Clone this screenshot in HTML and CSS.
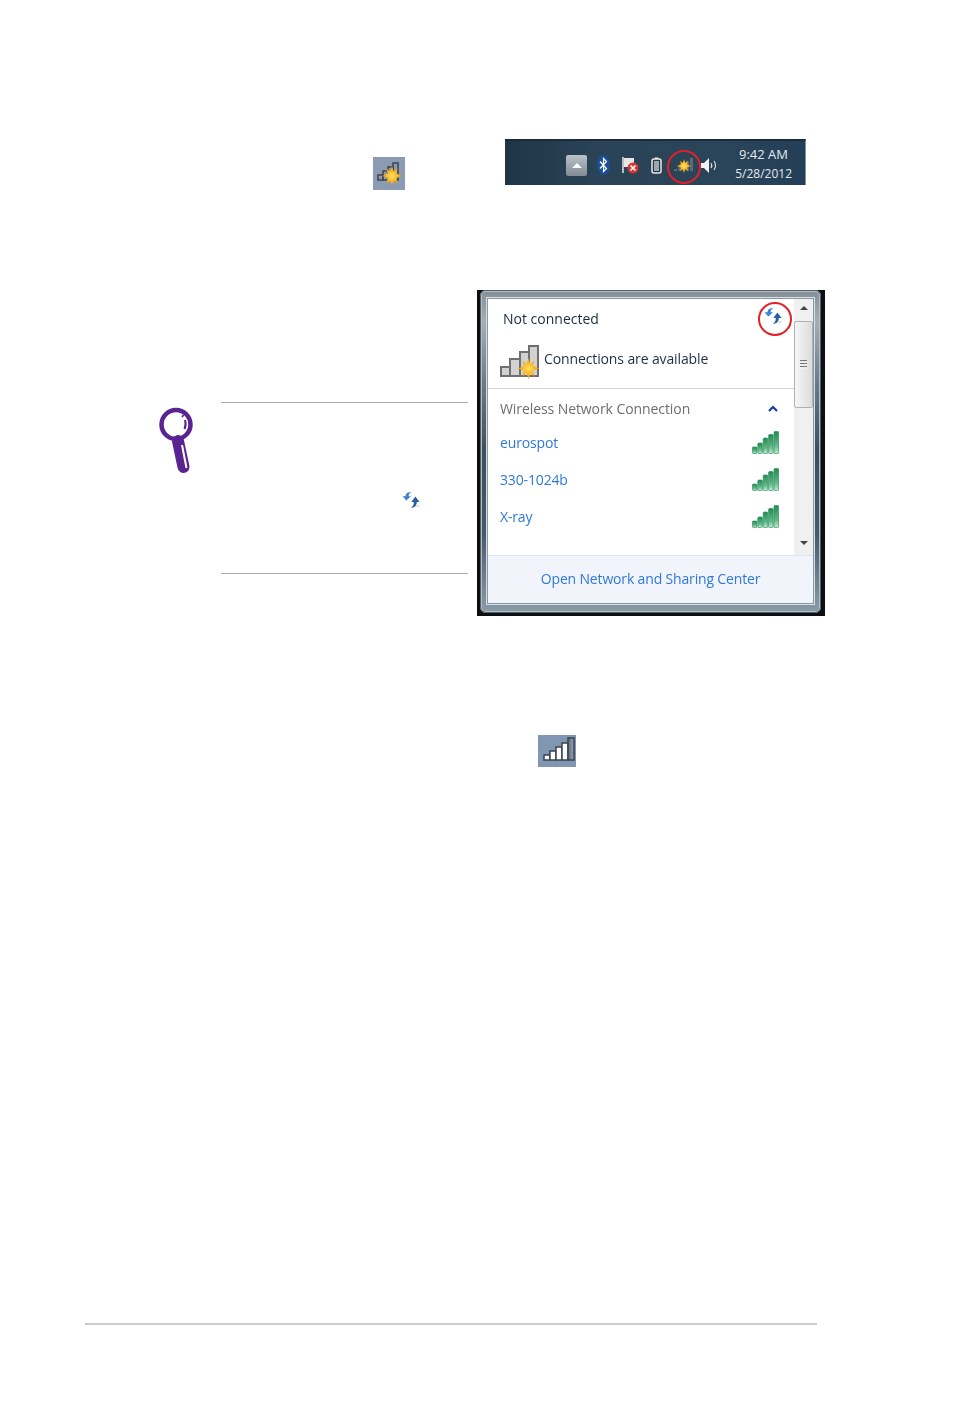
FILE: index.html
```html
<!DOCTYPE html>
<html lang="en">
<head>
    <meta charset="UTF-8">
    <meta name="viewport" content="width=device-width, initial-scale=1.0">
    <title>Wireless network connection</title>
    <link rel="stylesheet" href="styles.css">
</head>
<body>
    <svg class="defs" aria-hidden="true">
        <defs>
            <linearGradient id="barGreen" x1="0" y1="0" x2="0" y2="1">
                <stop offset="0" stop-color="#1f8a52"/>
                <stop offset="0.65" stop-color="#62b98a"/>
                <stop offset="1" stop-color="#c4ead4"/>
            </linearGradient>
            <radialGradient id="sunFill">
                <stop offset="0" stop-color="#ffe06a"/>
                <stop offset="0.6" stop-color="#fbb41a"/>
                <stop offset="1" stop-color="#ee9200"/>
            </radialGradient>
            <linearGradient id="lastBar" x1="0" y1="0" x2="1" y2="0">
                <stop offset="0" stop-color="#5f6b78"/>
                <stop offset="1" stop-color="#98a6b6"/>
            </linearGradient>
            <symbol id="sun" viewBox="-10 -10 20 20">
                <polygon fill="url(#sunFill)" points="0,-10 1.8,-4.4 5.6,-7.6 4.4,-2.6 10,0 4.4,2 5.6,7.6 1.8,4.4 0,10 -1.8,4.4 -5.6,7.6 -4.4,2 -10,0 -4.4,-2.6 -5.6,-7.6 -1.8,-4.4"/>
            </symbol>
            <symbol id="signal" viewBox="0 0 27 23">
                <g fill="url(#barGreen)" stroke="#2f9059" stroke-width="0.7">
                    <rect x="0.4" y="16" width="4.600" height="6.600" rx="1"/>
                    <rect x="5.800" y="12" width="4.600" height="10.600" rx="1"/>
                    <rect x="11.200" y="7" width="4.600" height="15.600" rx="1"/>
                    <rect x="16.600" y="3.500" width="4.600" height="19.100" rx="1"/>
                    <rect x="22" y="0.400" width="4.600" height="22.200" rx="1"/>
                </g>
            </symbol>
            <symbol id="sync" viewBox="0 0 18 18">
                <path d="M15 16c2 0 3-1 3-2l-5 1z" fill="#d5dbe2"/>
                <path d="M9.5 1.5C7.5 2 6.6 3.4 6.6 5.2H9L4.3 9.6 0.5 5.2h3C3.6 2.6 6 0.8 9.5 1.5z" fill="#3b82d8"/>
                <path d="M8.8 16.5c2.2-.6 3-2.600 3-5.500H9.300L13.400 5.500l4.100 5.500h-2.700c0 3.500-2.500 6.300-6 5.500z" fill="#2a5f9e"/>
            </symbol>
        </defs>
    </svg>

    <div class="page">
        <div class="tray-row">
            <!-- not connected tile -->
            <svg class="tile tile-small" viewBox="0 0 32 33">
                <g fill="none" stroke="#3c4450" stroke-width="1.500">
                    <rect x="5" y="18" width="5" height="5"/>
                    <rect x="10" y="14" width="5" height="9"/>
                    <rect x="15" y="10" width="5" height="13"/>
                    <rect x="20" y="6" width="5" height="17"/>
                </g>
                <use href="#sun" x="9" y="9" width="20" height="20"/>
            </svg>

            <div class="taskbar">
                <div class="tray-icons">
                    <div class="tray-up"><span class="tray-up-arrow"></span></div>
                    <svg class="tray-icon" width="13" height="20" viewBox="0 0 13 20">
                        <ellipse cx="6.500" cy="10" rx="6.500" ry="10" fill="#1a4f97"/>
                        <path d="M3 6.500l6.500 7-3 3v-13l3 3-6.500 7" fill="none" stroke="#fff" stroke-width="1.200"/>
                    </svg>
                    <svg class="tray-icon" width="18" height="18" viewBox="0 0 18 18">
                        <path d="M2 1v16" stroke="#e8e8e8" stroke-width="1.500"/>
                        <path d="M3 2h10v9H3z" fill="#e6e6e6"/>
                        <circle cx="12" cy="12" r="5.500" fill="#d8352e"/>
                        <path d="M9.500 9.500l5 5m0-5l-5 5" stroke="#fff" stroke-width="1.600"/>
                    </svg>
                    <svg class="tray-icon" width="11" height="17" viewBox="0 0 11 17">
                        <rect x="3.500" y="0.500" width="4" height="2" fill="#e8e8e8"/>
                        <rect x="1" y="2" width="9" height="14" rx="2" fill="#26384a" stroke="#e8e8e8" stroke-width="1.500"/>
                        <rect x="3" y="4" width="5" height="10" fill="#9aa6b0"/>
                    </svg>
                    <svg class="tray-icon" width="22" height="16" viewBox="0 0 22 16">
                        <g fill="#5d6a76">
                            <rect x="1" y="12" width="3" height="2"/>
                            <rect x="5" y="10" width="3" height="4"/>
                            <rect x="9" y="7" width="3" height="7"/>
                            <rect x="13" y="4" width="3" height="10"/>
                            <rect x="17" y="1" width="3" height="13"/>
                        </g>
                        <use href="#sun" x="4" y="2" width="14" height="14"/>
                    </svg>
                    <svg class="tray-icon" width="17" height="15" viewBox="0 0 17 15">
                        <path d="M0 5h3l5-5v15l-5-5H0z" fill="#f2f2f2"/>
                        <path d="M10 5c1 1.500 1 3.500 0 5M13 3c2 2.500 2 6.500 0 9" fill="none" stroke="#dfe4e8" stroke-width="1.100"/>
                    </svg>
                </div>
                <div class="clock">
                    <span>9:42 AM</span>
                    <span>5/28/2012</span>
                </div>
                <span class="red-circle tray-circle"></span>
            </div>
        </div>

        <div class="middle-row">
            <div class="note">
                <svg class="note-icon" width="36" height="70" viewBox="0 0 36 70">
                    <circle cx="18" cy="17.500" r="14.500" fill="#fff" stroke="#5b2392" stroke-width="4.500"/>
                    <path d="M24 8.500l1.500 1" stroke="#5b2392" stroke-width="2.500" fill="none"/>
                    <path d="M27 13c1 3 .8 6-.5 9" stroke="#5b2392" stroke-width="2" fill="none"/>
                    <path d="M20 34l5.500 26" stroke="#5b2392" stroke-width="12" stroke-linecap="round" fill="none"/>
                    <path d="M24 38l4.500 23" stroke="#fff" stroke-width="2" fill="none"/>
                </svg>
                <div class="note-box">
                    <svg class="note-sync" width="18" height="18"><use href="#sync"/></svg>
                </div>
            </div>

            <div class="panel">
                <div class="panel-frame">
                    <div class="panel-inner">
                        <div class="panel-main">
                            <div class="panel-content">
                                <div class="status-top">
                                    <span class="status-title">Not connected</span>
                                    <svg class="status-sync" width="18" height="18"><use href="#sync"/></svg>
                                    <span class="red-circle panel-circle"></span>
                                </div>
                                <div class="status-line">
                                    <svg width="40" height="34" viewBox="0 0 40 34">
                                        <g fill="#d2d2d2" stroke="#6f6f6f" stroke-width="2">
                                            <rect x="1" y="22" width="9" height="9"/>
                                            <rect x="10" y="14" width="10" height="17"/>
                                            <rect x="20" y="7" width="9" height="24"/>
                                            <rect x="29" y="1" width="9" height="30"/>
                                        </g>
                                        <use href="#sun" x="18" y="13" width="21" height="21"/>
                                    </svg>
                                    <span>Connections are available</span>
                                </div>
                                <div class="section-head">
                                    <span>Wireless Network Connection</span>
                                    <svg width="10" height="7" viewBox="0 0 10 7"><path d="M1 6l4-4 4 4" fill="none" stroke="#123f96" stroke-width="2.200"/></svg>
                                </div>
                                <ul class="networks">
                                    <li><span>eurospot</span><svg width="27" height="23"><use href="#signal"/></svg></li>
                                    <li><span>330-1024b</span><svg width="27" height="23"><use href="#signal"/></svg></li>
                                    <li><span>X-ray</span><svg width="27" height="23"><use href="#signal"/></svg></li>
                                </ul>
                            </div>
                            <div class="scrollbar">
                                <span class="arrow-up"></span>
                                <div class="thumb"><span class="grip"></span></div>
                                <span class="arrow-down"></span>
                            </div>
                        </div>
                        <div class="panel-footer">Open Network and Sharing Center</div>
                    </div>
                </div>
            </div>
        </div>

        <div class="bottom-row">
            <svg class="tile tile-large" viewBox="0 0 38 32">
                <g fill="#fff" stroke="#3a4350" stroke-width="1.500">
                    <rect x="6" y="20" width="6" height="5"/>
                    <rect x="12" y="16" width="6" height="9"/>
                    <rect x="18" y="12" width="6" height="13"/>
                    <rect x="24" y="8" width="6" height="17"/>
                </g>
                <rect x="30" y="3" width="6" height="22" fill="url(#lastBar)" stroke="#3a4350" stroke-width="1.500"/>
            </svg>
        </div>

        <div class="footer-rule"></div>
    </div>
</body>
</html>
```

FILE: styles.css
```css
body {
    margin: 0;
    background: #fff;
    font-family: "Open Sans", "Noto Sans", sans-serif;
}
.defs {
    position: absolute;
    width: 0;
    height: 0;
}
.page {
    height: 1417px;
    padding-top: 139px;
    box-sizing: border-box;
}
.tile {
    display: block;
    flex: none;
    filter: blur(0.4px);
}
.tile-small {
    width: 32px;
    height: 33px;
    margin-top: 18px;
    background: #8a9bb3;
}
.tile-large {
    width: 38px;
    height: 32px;
    background: #8096b2;
}

/* taskbar picture */
.tray-row {
    display: flex;
    align-items: flex-start;
    padding-left: 373px;
    gap: 100px;
}
.taskbar {
    position: relative;
    width: 301px;
    height: 46px;
    box-sizing: border-box;
    display: flex;
    align-items: center;
    padding: 4px 13px 0 61px;
    background: linear-gradient(90deg, #1f3547 0%, #2a4356 30%, #2a4459 75%, #233f57 100%);
    border-top: 2px solid #1a2c3c;
    border-right: 1px solid #7d93a5;
}
.tray-icons {
    display: flex;
    align-items: center;
    filter: blur(0.3px);
}
.tray-up {
    width: 21px;
    height: 21px;
    border-radius: 2px;
    background: linear-gradient(#bcc3c9, #7f8a94);
    display: flex;
    align-items: center;
    justify-content: center;
    margin-right: 10px;
}
.tray-up-arrow {
    border-left: 5px solid transparent;
    border-right: 5px solid transparent;
    border-bottom: 5px solid #fff;
}
.tray-icon {
    display: block;
    flex: none;
    margin-right: 11px;
}
.tray-icon:nth-child(4) {
    margin-left: 1px;
}
.tray-icon:nth-child(5) {
    margin-right: 6px;
}
.tray-icon:last-child {
    margin-right: 0;
}
.clock {
    margin-left: auto;
    margin-top: -2px;
    display: flex;
    flex-direction: column;
    align-items: flex-end;
    color: #e4e9ee;
    font-size: 12px;
    line-height: 19px;
}
.clock span:first-child {
    margin-right: 4px;
    font-size: 13px;
}
.red-circle {
    position: absolute;
    box-sizing: border-box;
    width: 34px;
    height: 34px;
    border: 2px solid #e0202a;
    border-radius: 50%;
}
.tray-circle {
    left: 162px;
    top: 9px;
}

/* note + wifi panel */
.middle-row {
    display: flex;
    margin-top: 100px;
    padding-left: 158px;
}
.note {
    display: flex;
    align-items: flex-start;
    width: 310px;
    padding-top: 112px;
    margin-right: 9px;
}
.note-icon {
    display: block;
    flex: none;
    margin: 5px 27px 0 0;
}
.note-box {
    flex: 1;
    height: 172px;
    box-sizing: border-box;
    border-top: 1px solid #aaa;
    border-bottom: 1px solid #aaa;
    padding: 88px 0 0 181px;
}
.note-sync {
    display: block;
}
.panel {
    width: 348px;
    height: 326px;
    box-sizing: border-box;
    background: #0b0f12;
    padding: 0 4px 3px 3px;
    filter: blur(0.3px);
}
.panel-frame {
    height: 100%;
    box-sizing: border-box;
    padding: 9px 8px 10px 8px;
    border-radius: 6px;
    background: linear-gradient(#838e96 0%, #a4aeb5 10%, #6c7d8a 28%, #3c4f5e 50%, #46596a 75%, #8b9ca9 100%);
    box-shadow: inset 0 0 0 1px #555c62, inset 0 0 0 2px #b4bec6;
}
.panel-inner {
    height: 100%;
    display: flex;
    flex-direction: column;
    background: #fff;
    box-shadow: 0 0 0 1px #8a96a0, 0 0 0 2px #d8dfe4;
}
.panel-main {
    flex: 1;
    display: flex;
    min-height: 0;
}
.panel-content {
    flex: 1;
    min-width: 0;
}
.status-top {
    position: relative;
    display: flex;
    align-items: center;
    justify-content: space-between;
    height: 41px;
    padding: 0 12px 0 15px;
}
.status-title {
    color: #1f2a3a;
    font-size: 14px;
    margin-top: -2px;
}
.status-sync {
    display: block;
    margin-top: -8px;
}
.status-top .panel-circle {
    right: 2px;
    top: 3px;
}
.status-line {
    display: flex;
    align-items: flex-start;
    gap: 4px;
    height: 49px;
    box-sizing: border-box;
    padding: 5px 0 0 12px;
    border-bottom: 1px solid #d2d4d6;
    color: #1f2f48;
    font-size: 14px;
    letter-spacing: -0.12px;
}
.status-line svg {
    display: block;
}
.status-line span {
    margin-top: 4px;
}
.section-head {
    display: flex;
    align-items: center;
    justify-content: space-between;
    height: 35px;
    box-sizing: border-box;
    padding: 4px 16px 0 12px;
    color: #6e6e6e;
    font-size: 14px;
    letter-spacing: -0.08px;
}
.networks {
    list-style: none;
    margin: 0;
    padding: 0 15px 0 12px;
}
.networks li {
    display: flex;
    align-items: center;
    justify-content: space-between;
    height: 37px;
    color: #2f78dc;
    font-size: 14px;
    letter-spacing: -0.15px;
}
.networks svg {
    display: block;
}
.scrollbar {
    width: 19px;
    display: flex;
    flex-direction: column;
    align-items: center;
    background: #f0f0f0;
    padding: 7px 0 10px;
    box-sizing: border-box;
}
.arrow-up {
    border-left: 4px solid transparent;
    border-right: 4px solid transparent;
    border-bottom: 4px solid #444;
}
.arrow-down {
    margin-top: auto;
    border-left: 4px solid transparent;
    border-right: 4px solid transparent;
    border-top: 4px solid #444;
}
.thumb {
    width: 100%;
    height: 87px;
    margin-top: 11px;
    box-sizing: border-box;
    border: 1px solid #aeb2b6;
    border-radius: 2px;
    background: linear-gradient(90deg, #f6f6f6, #dcdcdc);
    display: flex;
    align-items: center;
    justify-content: center;
}
.grip {
    width: 7px;
    height: 9px;
    background: repeating-linear-gradient(#777 0 1px, #eee 1px 3px);
}
.panel-footer {
    flex: none;
    height: 48px;
    box-sizing: border-box;
    padding-bottom: 2px;
    display: flex;
    align-items: center;
    justify-content: center;
    background: #f1f5fb;
    border-top: 1px solid #dce7f5;
    color: #2f78dc;
    font-size: 14px;
    letter-spacing: -0.16px;
}

.bottom-row {
    margin-top: 119px;
    padding-left: 538px;
}
.footer-rule {
    margin: 556px 137px 0 85px;
    height: 2px;
    background: #ccc;
}
```
